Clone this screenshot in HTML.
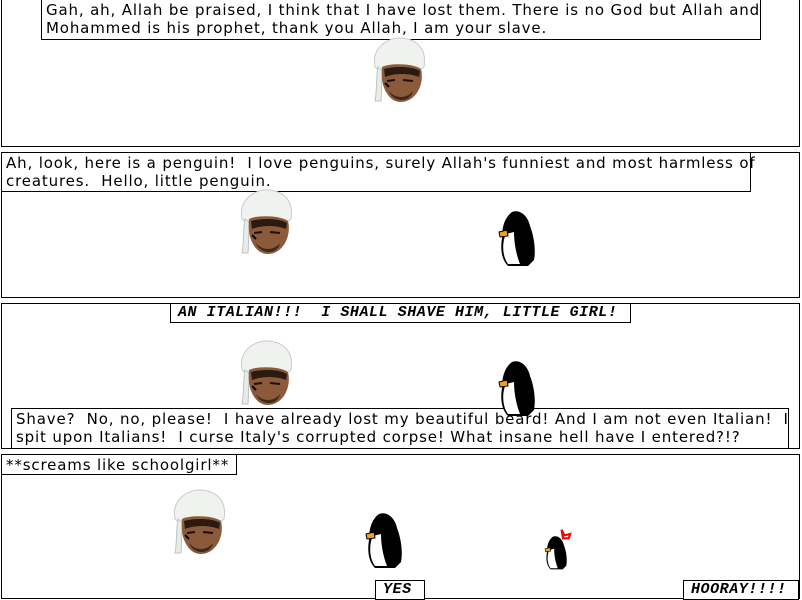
<!DOCTYPE html>
<html><head><meta charset="utf-8"><style>
body{margin:0;width:802px;height:600px;background:#fff;position:relative;overflow:hidden;font-family:"DejaVu Sans","Liberation Sans",sans-serif;}
.a{position:absolute;box-sizing:border-box}
.p{border:1px solid #000}
.b{border:1px solid #000;background:#fff;font-size:15px;letter-spacing:0.85px;line-height:18px;color:#000;white-space:nowrap;padding:1px 0 0 4px;overflow:visible}
.t{font-family:"Liberation Mono","DejaVu Sans Mono",monospace;font-weight:bold;font-style:italic;font-size:15px;letter-spacing:0.55px;line-height:16px;padding-left:7px}
svg{position:absolute}
</style></head><body>
<svg width="0" height="0" style="position:absolute">
<defs>
<g id="head">
<path d="M6 30 C2 10 20 0 32 1 C48 2 58 12 55 30 L50 34 C40 28 20 28 10 34 Z" fill="#f0f2f0" stroke="#c8ccc8"/>
<path d="M9 30 C7 40 8 55 6 64 L12 64 C13 55 12 42 14 34 Z" fill="#e8ece8" stroke="#c0c4c0"/>
<path d="M13 30 C20 26 44 26 52 32 C55 44 50 58 40 63 C32 67 24 65 19 58 C13 50 12 40 13 30 Z" fill="#8a5a3a"/>
<path d="M15 32 C24 29 44 29 51 34 L50 40 C40 36 26 36 16 40 Z" fill="#2a1a10"/>
<path d="M18 44 L26 43 M34 43 L44 44" stroke="#201008" stroke-width="2"/>
<path d="M20 54 C26 62 38 62 44 54 C42 66 24 66 20 54 Z" fill="#3a2a20"/>
<path d="M16 46 L20 50" stroke="#000" stroke-width="2"/>
</g>
<g id="peng">
<path d="M14 2 C22 -1 30 6 32 16 C36 26 38 40 36 50 L30 56 L10 56 C4 50 2 40 4 28 C4 18 6 8 14 2 Z" fill="#000"/>
<path d="M8 24 C4 32 4 46 10 54 L22 54 C18 44 16 32 16 22 Z" fill="#fff"/>
<path d="M1 22 L9 20 L10 26 L2 27 Z" fill="#f0a020" stroke="#000" stroke-width="1"/>
</g>
</defs></svg>

<!-- panel 1 -->
<div class="a p" style="left:1px;top:-1px;width:799px;height:148px"></div>
<div class="a b" style="left:41px;top:-1px;width:720px;height:41px">Gah, ah, Allah be praised, I think that I have lost them. There is no God but Allah and<br>Mohammed is his prophet, thank you Allah, I am your slave.</div>
<svg style="left:369px;top:37px" width="60" height="68" viewBox="0 0 60 68"><use href="#head"/></svg>

<!-- panel 2 -->
<div class="a p" style="left:1px;top:152px;width:799px;height:146px"></div>
<div class="a b" style="left:1px;top:152px;width:750px;height:40px">Ah, look, here is a penguin!&nbsp; I love penguins, surely Allah's funniest and most harmless of<br>creatures.&nbsp; Hello, little penguin.</div>
<svg style="left:236px;top:189px" width="60" height="68" viewBox="0 0 60 68"><use href="#head"/></svg>
<svg style="left:498px;top:210px" width="42" height="58" viewBox="0 0 42 58"><use href="#peng"/></svg>

<!-- panel 3 -->
<div class="a p" style="left:1px;top:303px;width:799px;height:146px"></div>
<div class="a b t" style="left:170px;top:303px;width:461px;height:20px">AN ITALIAN!!!&nbsp; I SHALL SHAVE HIM, LITTLE GIRL!</div>
<div class="a b" style="left:11px;top:408px;width:778px;height:41px">Shave?&nbsp; No, no, please!&nbsp; I have already lost my beautiful beard! And I am not even Italian!&nbsp; I<br>spit upon Italians!&nbsp; I curse Italy's corrupted corpse! What insane hell have I entered?!?</div>
<svg style="left:236px;top:340px" width="60" height="68" viewBox="0 0 60 68"><use href="#head"/></svg>
<svg style="left:498px;top:360px" width="42" height="58" viewBox="0 0 42 58"><use href="#peng"/></svg>

<!-- panel 4 -->
<div class="a p" style="left:1px;top:454px;width:799px;height:145px"></div>
<div class="a b" style="left:1px;top:454px;width:236px;height:21px">**screams like schoolgirl**</div>
<svg style="left:169px;top:489px" width="60" height="68" viewBox="0 0 60 68"><use href="#head"/></svg>
<svg style="left:365px;top:512px" width="42" height="58" viewBox="0 0 42 58"><use href="#peng"/></svg>
<svg style="left:543px;top:528px" width="30" height="42" viewBox="0 0 42 58"><use href="#peng" transform="translate(2,10) scale(0.85)"/><path d="M26 2 L30 10 L38 8 L36 14 L28 14 Z" fill="none" stroke="#f00" stroke-width="3"/></svg>
<div class="a b t" style="left:375px;top:580px;width:50px;height:20px">YES</div>
<div class="a b t" style="left:683px;top:580px;width:116px;height:20px">HOORAY!!!!</div>
</body></html>
